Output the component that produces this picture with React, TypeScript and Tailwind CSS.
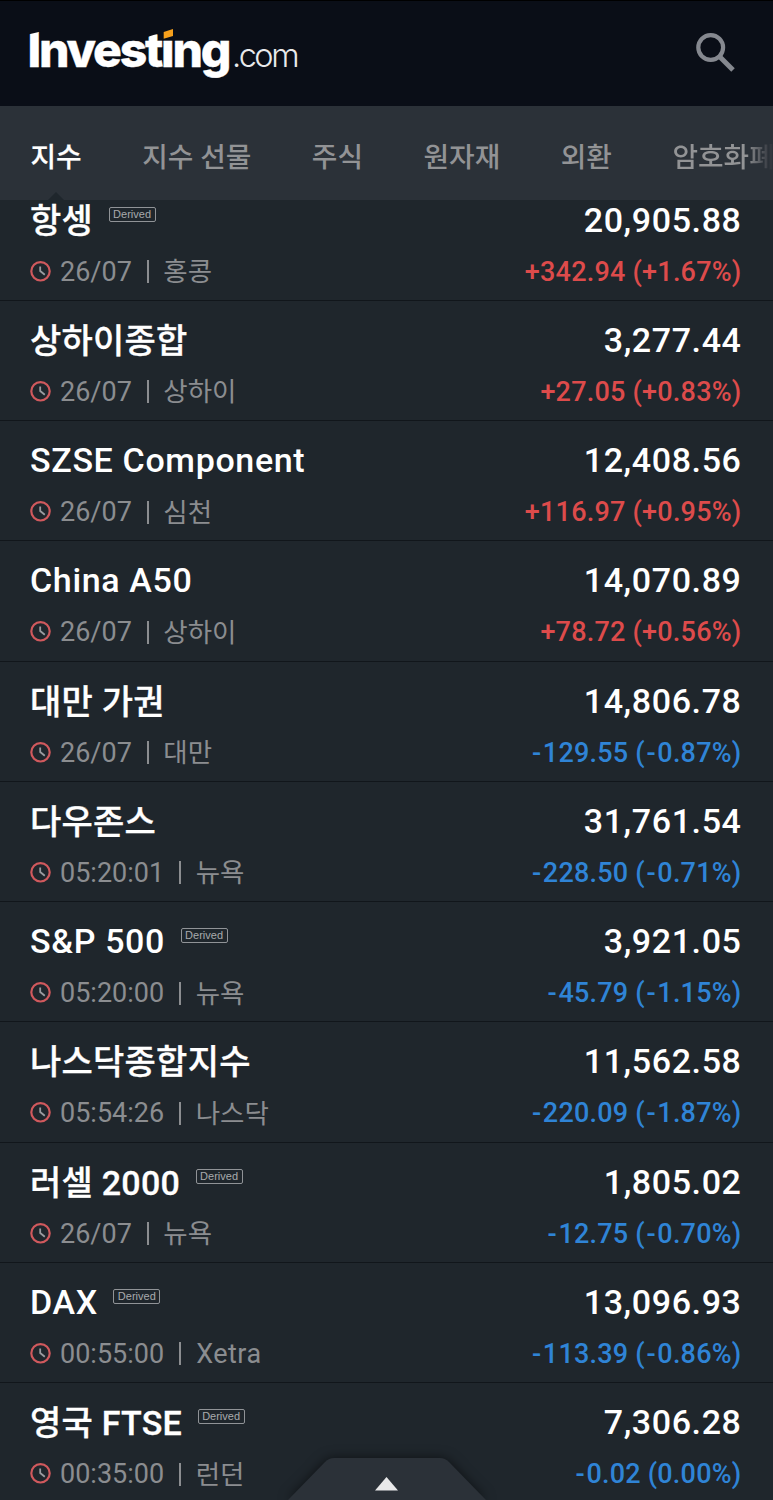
import React from 'react';

interface Quote {
    name: string;
    derived?: boolean;
    time: string;
    market: string;
    price: string;
    change: string;
    up?: boolean;
}

const TABS = ['지수', '지수 선물', '주식', '원자재', '외환'];

const QUOTES: Quote[] = [
    { name: '항셍', derived: true, time: '26/07', market: '홍콩', price: '20,905.88', change: '+342.94 (+1.67%)', up: true },
    { name: '상하이종합', time: '26/07', market: '상하이', price: '3,277.44', change: '+27.05 (+0.83%)', up: true },
    { name: 'SZSE Component', time: '26/07', market: '심천', price: '12,408.56', change: '+116.97 (+0.95%)', up: true },
    { name: 'China A50', time: '26/07', market: '상하이', price: '14,070.89', change: '+78.72 (+0.56%)', up: true },
    { name: '대만 가권', time: '26/07', market: '대만', price: '14,806.78', change: '-129.55 (-0.87%)' },
    { name: '다우존스', time: '05:20:01', market: '뉴욕', price: '31,761.54', change: '-228.50 (-0.71%)' },
    { name: 'S&P 500', derived: true, time: '05:20:00', market: '뉴욕', price: '3,921.05', change: '-45.79 (-1.15%)' },
    { name: '나스닥종합지수', time: '05:54:26', market: '나스닥', price: '11,562.58', change: '-220.09 (-1.87%)' },
    { name: '러셀 2000', derived: true, time: '26/07', market: '뉴욕', price: '1,805.02', change: '-12.75 (-0.70%)' },
    { name: 'DAX', derived: true, time: '00:55:00', market: 'Xetra', price: '13,096.93', change: '-113.39 (-0.86%)' },
    { name: '영국 FTSE', derived: true, time: '00:35:00', market: '런던', price: '7,306.28', change: '-0.02 (0.00%)' },
];

const isLatin = (text: string) => /^[A-Z]/.test(text);

const Logo: React.FC = () => (
    <svg width="274" height="60" viewBox="0 -5 274 60" className="block overflow-visible">
        <text x="-2.5" y="42" textLength="204" lengthAdjust="spacing" fill="#fff" stroke="#fff" strokeWidth="0.4" className="font-['Inter',sans-serif] text-[48px] font-extrabold">Investing</text>
        {/* slanted tops of the I and the t, then the orange i dot */}
        <path d="M-2 0H11V6.5L-2 9.5Z" fill="#0a0e17" />
        <path d="M116 4H128V8.5L116 12.5Z" fill="#0a0e17" />
        <path d="M131 0H146V14.5H131Z" fill="#0a0e17" />
        <path d="M133.7 7L143 4V11L133.7 13.7Z" fill="#f6a01c" />
        <text x="202" y="42" textLength="67.5" lengthAdjust="spacing" fill="#e8e9eb" className="font-['Inter',sans-serif] text-[32.5px] font-light">.com</text>
    </svg>
);

const SearchIcon: React.FC = () => (
    <svg width="40" height="40" viewBox="0 0 40 40" fill="none" stroke="#85888f" className="block">
        <circle cx="14.7" cy="14.5" r="12.4" strokeWidth="4.2" />
        <path d="M24 24L37 37" strokeWidth="5" />
    </svg>
);

const ClockIcon: React.FC = () => (
    <svg width="22" height="22" viewBox="0 0 22 22" fill="none" className="block shrink-0">
        <circle cx="10.5" cy="10.3" r="9.2" stroke="#d0595d" strokeWidth="2.2" />
        <path d="M10.2 5.5V10L14.8 13.8" stroke="#9a9ca0" strokeWidth="1.8" />
    </svg>
);

// the minus signs need a little more room than the font gives them
const Change: React.FC<{ quote: Quote }> = ({ quote }) => (
    <span className={quote.up ? 'font-medium tracking-[0.22px] text-[#dd4b4b]' : 'font-medium tracking-[0.22px] text-[#2f84d6]'}>
        {quote.change.split(/(-)/).map((part, i) => (
            part === '-' ? <span key={i} className="mx-[1.5px]">-</span> : part
        ))}
    </span>
);

const QuoteRow: React.FC<{ quote: Quote }> = ({ quote }) => (
    <div className="h-[120.25px] shrink-0 border-b border-[#11161b] pl-[30px] pr-[31.5px] pt-[19px]">
        <div className="flex h-10 justify-between text-[34px] leading-10 font-medium text-white">
            <div className="flex">
                <span className={isLatin(quote.name) ? 'tracking-[0.65px]' : 'pt-px tracking-[0.25px] [-webkit-text-stroke:0.3px_white]'}>{quote.name}</span>
                {quote.derived && (
                    <span className="mt-[7px] ml-[15.5px] flex h-[15px] w-[47px] items-center justify-center rounded-[2px] border border-[#909397] font-['Liberation_Sans',sans-serif] text-[11px] leading-none font-normal text-[#a8aaac]">
                        Derived
                    </span>
                )}
            </div>
            <span className="tracking-[0.6px]">{quote.price}</span>
        </div>
        <div className="mt-[14px] flex h-9 items-center justify-between text-[27px] leading-9 text-[#8b8d90]">
            <div className="flex items-center">
                <ClockIcon />
                <span className="ml-2">{quote.time}</span>
                <span className="ml-[15px] h-[23px] w-[2px] bg-[#8b8d90]" />
                <span className={isLatin(quote.market) ? 'ml-[15px] tracking-[0.5px]' : 'ml-[14.5px] pt-px text-[26.5px]'}>{quote.market}</span>
            </div>
            <Change quote={quote} />
        </div>
    </div>
);

const App: React.FC = () => {
    return (
        <div className="relative flex h-[1500px] w-[773px] flex-col overflow-hidden bg-[#1f262c] font-['Roboto','Noto_Sans_CJK_KR',sans-serif]">
            <header className="flex h-[106px] shrink-0 justify-between border-t border-black bg-[#0a0e17] pt-[19px] pr-[37px] pl-[30px]">
                <Logo />
                <div className="pt-[13px]">
                    <SearchIcon />
                </div>
            </header>

            <nav className="relative flex h-[94px] shrink-0 overflow-hidden bg-[#2b3138] pt-8 pl-[30.5px] text-[27.8px] leading-10 font-medium whitespace-nowrap text-[#929395]">
                <div className="flex gap-[60.5px]">
                    {TABS.map((tab, i) => (
                        <span key={tab} className={i === 0 ? 'text-white [-webkit-text-stroke:0.2px]' : ''}>{tab}</span>
                    ))}
                    <span className="bg-linear-to-r from-[#929395] from-72% to-[#34383f] to-95% bg-clip-text text-transparent">암호화폐</span>
                </div>
                <svg width="16" height="8" viewBox="0 0 16 8" className="absolute bottom-0 left-12">
                    <path d="M0 8L8 0L16 8Z" fill="#1f262c" />
                </svg>
            </nav>

            <main className="flex min-h-0 flex-1 flex-col overflow-hidden">
                <div className="-mt-[19.5px] flex flex-col">
                    {QUOTES.map((quote) => (
                        <QuoteRow key={quote.name} quote={quote} />
                    ))}
                </div>
            </main>

            <svg width="220" height="60" viewBox="0 0 220 60" className="absolute bottom-0 left-[276px] drop-shadow-[0_0_6px_rgba(0,0,0,0.55)]">
                <path d="M12 60L49 22Q53 18 58 18H164Q169 18 173 22L210 60Z" fill="#2b3138" />
                <path d="M99 50.5L110.5 37L122 50.5Z" fill="#e9e9ea" />
            </svg>
        </div>
    );
};

export default App;
